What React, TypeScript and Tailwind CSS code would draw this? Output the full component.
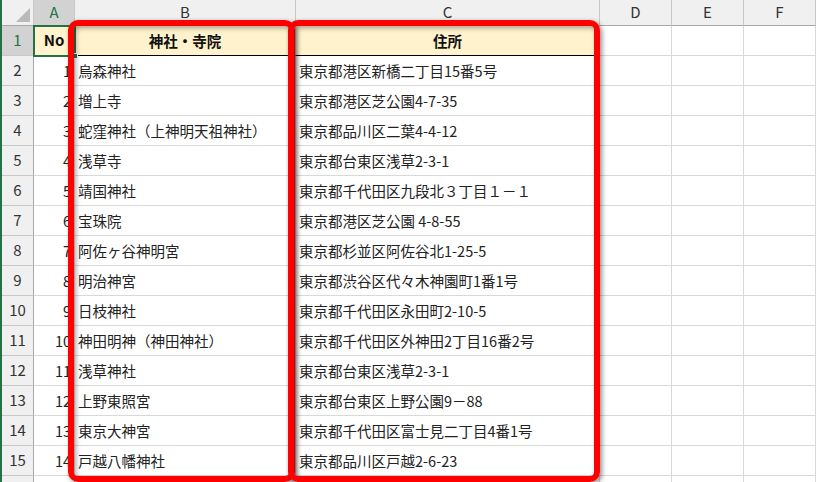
const rows: [string, string][] = [
  ["烏森神社", "東京都港区新橋二丁目15番5号"],
  ["増上寺", "東京都港区芝公園4-7-35"],
  ["蛇窪神社（上神明天祖神社）", "東京都品川区二葉4-4-12"],
  ["浅草寺", "東京都台東区浅草2-3-1"],
  ["靖国神社", "東京都千代田区九段北３丁目１－１"],
  ["宝珠院", "東京都港区芝公園 4-8-55"],
  ["阿佐ヶ谷神明宮", "東京都杉並区阿佐谷北1-25-5"],
  ["明治神宮", "東京都渋谷区代々木神園町1番1号"],
  ["日枝神社", "東京都千代田区永田町2-10-5"],
  ["神田明神（神田神社）", "東京都千代田区外神田2丁目16番2号"],
  ["浅草神社", "東京都台東区浅草2-3-1"],
  ["上野東照宮", "東京都台東区上野公園9－88"],
  ["東京大神宮", "東京都千代田区富士見二丁目4番1号"],
  ["戸越八幡神社", "東京都品川区戸越2-6-23"],
];

const cols = ["A", "B", "C", "D", "E", "F"];

function RowHead({ n, active }: { n?: number; active?: boolean }) {
  return (
    <div
      className={
        "flex items-center justify-center border-b border-r border-b-[#c8c8c8] border-r-[#a8a8a8] text-[15px] " +
        (active ? "bg-[#d2d2d2] text-[#217346]" : "bg-[#f0f0f0] text-[#333]")
      }
    >
      {n}
    </div>
  );
}

function Cell({ children, className = "" }: { children?: React.ReactNode; className?: string }) {
  return (
    <div
      className={
        "flex items-center overflow-hidden whitespace-nowrap border-b border-r border-[#d9d9d9] px-[3px] text-[14.5px] text-[#222] " +
        className
      }
    >
      {children}
    </div>
  );
}

export default function App() {
  return (
    <div className="relative h-[482px] w-[816px] overflow-hidden bg-white font-['Noto_Sans_CJK_JP','Noto_Sans',sans-serif]">
      <div className="grid grid-cols-[32px_41px_221px_304px_72px_72px_72px] grid-rows-[26px_repeat(16,30px)] border-l-2 border-[#217346]">
        {/* column headers */}
        <div className="relative border-b border-r border-b-[#a8a8a8] border-r-[#c8c8c8] bg-[#f0f0f0]">
          <svg className="absolute right-[3px] bottom-[3px]" width="14" height="14" viewBox="0 0 14 14">
            <polygon points="14,0 14,14 0,14" fill="#b9b9b9" />
          </svg>
        </div>
        {cols.map((c, i) => (
          <div
            key={c}
            className={
              "flex items-center justify-center border-b border-r border-b-[#a8a8a8] border-r-[#c8c8c8] text-[15px] " +
              (i === 0 ? "bg-[#d2d2d2] text-[#217346]" : "bg-[#f0f0f0] text-[#333]")
            }
          >
            {c}
          </div>
        ))}

        {/* row 1 */}
        <RowHead n={1} active />
        <div className="relative flex items-center justify-center border-b border-r border-b-black border-r-[#d9d9d9] bg-[#fff2cc] text-[15px] font-bold text-[#111]">
          No
          <div className="absolute -left-px -top-px h-[32px] w-[43px] border-2 border-[#217346]" />
          <div className="absolute -bottom-[4px] -right-[4px] h-[6px] w-[6px] border border-white bg-[#217346]" />
        </div>
        <div className="flex items-center justify-center border-b border-r border-b-black border-r-[#d9d9d9] bg-[#fff2cc] text-[14.5px] font-bold text-[#111]">
          神社・寺院
        </div>
        <div className="flex items-center justify-center border-b border-r border-b-black border-r-[#d9d9d9] bg-[#fff2cc] text-[14.5px] font-bold text-[#111]">
          住所
        </div>
        <Cell />
        <Cell />
        <Cell />

        {rows.map(([name, addr], i) => (
          <div key={i} className="contents">
            <RowHead n={i + 2} />
            <Cell className="justify-end">{i + 1}</Cell>
            <Cell>{name}</Cell>
            <Cell>{addr}</Cell>
            <Cell />
            <Cell />
            <Cell />
          </div>
        ))}

        {/* partial row 16, cut by the window edge */}
        <RowHead />
        <Cell />
        <Cell />
        <Cell />
        <Cell />
        <Cell />
        <Cell />
      </div>

      {/* red highlight frames */}
      <div className="absolute left-[68px] top-[20px] h-[462px] w-[227px] rounded-[10px] border-[6px] border-[#ff0000] shadow-[2px_2px_5px_rgba(0,0,0,0.45),inset_2px_2px_5px_rgba(0,0,0,0.35)]" />
      <div className="absolute left-[288px] top-[20px] h-[462px] w-[312px] rounded-[10px] border-[6px] border-[#ff0000] shadow-[2px_2px_5px_rgba(0,0,0,0.45),inset_2px_2px_5px_rgba(0,0,0,0.35)]" />
    </div>
  );
}
